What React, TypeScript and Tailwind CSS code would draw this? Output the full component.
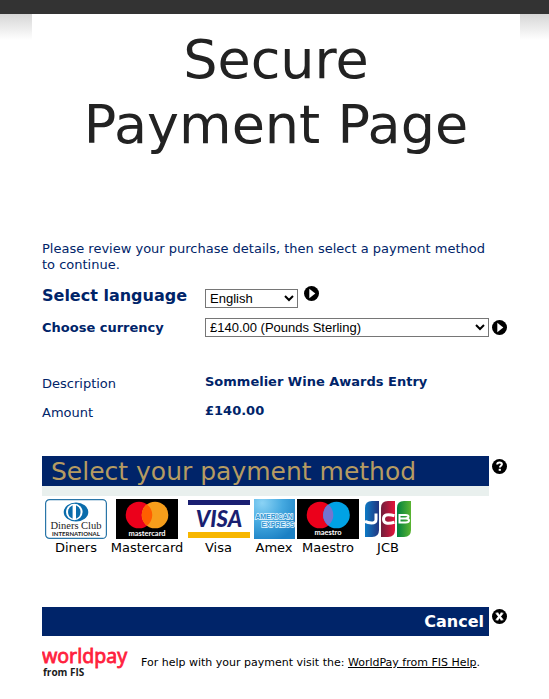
import type { ReactNode } from "react";

const logoText = { fontFamily: 'Lato, "Open Sans", sans-serif' };

function PlayIcon() {
  return (
    <svg viewBox="0 0 15 15" className="block size-[15px]" aria-hidden="true">
      <circle cx="7.5" cy="7.5" r="7.5" fill="#000" />
      <path d="M5.3 2.8v9.4L11.3 7.5z" fill="#fff" />
    </svg>
  );
}

function HelpIcon() {
  return (
    <svg viewBox="0 0 15 15" className="block size-[15px]" aria-hidden="true">
      <circle cx="7.5" cy="7.5" r="7.5" fill="#000" />
      <path d="M5.2 5.5C5.2 4 6.2 3.5 7.5 3.5s2.4.6 2.4 1.8c0 1.4-2 1.5-2 3.2" fill="none" stroke="#fff" strokeWidth="2" />
      <rect x="6.7" y="9.8" width="2.2" height="2" fill="#fff" />
    </svg>
  );
}

function CloseIcon() {
  return (
    <svg viewBox="0 0 15 15" className="block size-[15px]" aria-hidden="true">
      <circle cx="7.5" cy="7.5" r="7.5" fill="#000" />
      <path d="M4.8 4.3l5.4 6.4M10.2 4.3l-5.4 6.4" stroke="#fff" strokeWidth="2.2" />
      <path d="M3.6 4.2h3M8.4 4.2h3M3.6 10.8h3M8.4 10.8h3" stroke="#fff" strokeWidth="1" />
    </svg>
  );
}

function DinersLogo() {
  return (
    <svg viewBox="0 0 62 40" width="62" height="40" aria-hidden="true">
      <rect x="0.6" y="0.6" width="60.8" height="38.8" rx="4" fill="#fff" stroke="#2a76a8" strokeWidth="1.2" />
      <ellipse cx="31" cy="13" rx="12.3" ry="9.5" fill="#0a6cab" />
      <circle cx="29.3" cy="13" r="8.3" fill="#fff" />
      <path d="M27.6 6.3a7.2 7.2 0 0 0 0 13.4zM31 6.3a7.2 7.2 0 0 1 0 13.4z" fill="#0a6cab" />
      <text x="31" y="30" textAnchor="middle" fontSize="10.5" fontFamily='"Liberation Serif", serif' fill="#222">Diners Club</text>
      <text x="31" y="36.500" textAnchor="middle" fontSize="6" fontWeight="700" style={logoText} fill="#222">INTERNATIONAL</text>
    </svg>
  );
}

function MastercardLogo() {
  return (
    <svg viewBox="0 0 62 40" width="62" height="40" aria-hidden="true">
      <rect width="62" height="40" fill="#000" />
      <circle cx="23" cy="16" r="13.3" fill="#eb001b" />
      <circle cx="39" cy="16" r="13.3" fill="#f79e1b" />
      <path d="M31 5.4a13.3 13.3 0 0 1 0 21.2a13.3 13.3 0 0 1 0-21.2z" fill="#ff5f00" />
      <text x="31" y="36.5" textAnchor="middle" fontSize="7.5" fontWeight="700" style={logoText} fill="#fff">mastercard</text>
    </svg>
  );
}

function VisaLogo() {
  return (
    <svg viewBox="0 0 62 40" width="62" height="40" aria-hidden="true">
      <rect width="62" height="40" fill="#fff" />
      <rect y="1" width="62" height="5" fill="#1a1f71" />
      <rect y="33" width="62" height="6" fill="#f7b600" />
      <text x="31" y="27.5" textAnchor="middle" fontSize="22" fontWeight="900" fontStyle="italic" style={logoText} fill="#1a1f71">VISA</text>
    </svg>
  );
}

function AmexLogo() {
  return (
    <svg viewBox="0 0 41 40" width="41" height="40" aria-hidden="true">
      <defs>
        <radialGradient id="amex" cx="0.2" cy="0.1" r="1">
          <stop offset="0" stopColor="#8bd3f5" />
          <stop offset="0.5" stopColor="#45a9e0" />
          <stop offset="1" stopColor="#1b80c4" />
        </radialGradient>
      </defs>
      <rect width="41" height="40" fill="url(#amex)" />
      <g fontFamily='"Liberation Sans", Arial, sans-serif' fontSize="7" fontWeight="700" fill="#2f95d2" stroke="#e8f7ff" strokeWidth="1.4" style={{ paintOrder: "stroke" }}>
        <text x="20" y="20" textAnchor="middle">AMERICAN</text>
        <text x="40.5" y="28" textAnchor="end">EXPRESS</text>
      </g>
    </svg>
  );
}

function MaestroLogo() {
  return (
    <svg viewBox="0 0 62 40" width="62" height="40" aria-hidden="true">
      <rect width="62" height="40" fill="#000" />
      <circle cx="23" cy="16" r="13.3" fill="#eb001b" />
      <circle cx="39.5" cy="16" r="13.3" fill="#00a2e5" />
      <path d="M31.2 5.5a13.3 13.3 0 0 1 0 21a13.3 13.3 0 0 1 0-21z" fill="#7375cf" />
      <text x="31" y="36" textAnchor="middle" fontSize="7.5" fontWeight="700" style={logoText} fill="#fff">maestro</text>
    </svg>
  );
}

function JcbLogo() {
  return (
    <svg viewBox="0 0 48 40" width="48" height="40" aria-hidden="true">
      <defs>
        <linearGradient id="jcb-blue"><stop offset="0" stopColor="#0d7ac5" /><stop offset="1" stopColor="#22357f" /></linearGradient>
        <linearGradient id="jcb-red"><stop offset="0" stopColor="#6f1f3c" /><stop offset="1" stopColor="#e5133b" /></linearGradient>
        <linearGradient id="jcb-green"><stop offset="0" stopColor="#00813f" /><stop offset="1" stopColor="#5bb431" /></linearGradient>
      </defs>
      <path d="M1 9q0-7 7-7h7v29q0 7-7 7H1z" fill="url(#jcb-blue)" />
      <path d="M17 9q0-7 7-7h7v29q0 7-7 7h-7z" fill="url(#jcb-red)" />
      <path d="M33 9q0-7 7-7h7v29q0 7-7 7h-7z" fill="url(#jcb-green)" />
      <g fill="none" stroke="#fff" strokeWidth="3">
        <path d="M12 14.5v6q0 3.500-4.500 3.500-3.500 0-6.500-1.600" />
        <path d="M30.5 16.700q-11-3-11 3.300t11 3.300" />
        <path d="M34.5 16h7q3 0 3 1.600t-3 1.900h-7M34.500 19.500h7q3.500 0 3.500 2t-3.500 2h-7M35.500 15v9" strokeWidth="2" />
      </g>
    </svg>
  );
}

function WorldpayLogo() {
  return (
    <svg viewBox="0 0 86 34" width="86" height="34" className="shrink-0" role="img" aria-label="worldpay from FIS">
      <text x="0" y="16" fontSize="19.5" fontFamily='"Noto Sans", sans-serif' fill="#ff1f3e" stroke="#ff1f3e" strokeWidth="0.8">worldpay</text>
      <text x="1" y="29" fontSize="10" fontWeight="700" fontFamily='"Open Sans", sans-serif' fill="#1b1b1b">from FIS</text>
    </svg>
  );
}

const methods: { name: string; width: string; logo: ReactNode }[] = [
  { name: "Diners", width: "w-[68px]", logo: <DinersLogo /> },
  { name: "Mastercard", width: "w-[74px]", logo: <MastercardLogo /> },
  { name: "Visa", width: "w-[69px]", logo: <VisaLogo /> },
  { name: "Amex", width: "w-[42px]", logo: <AmexLogo /> },
  { name: "Maestro", width: "w-[66px]", logo: <MaestroLogo /> },
  { name: "JCB", width: "w-[54px]", logo: <JcbLogo /> },
];

const selectStyle =
  "h-[19px] rounded-none border border-[#767676] bg-white p-0 font-['Liberation_Sans',Arial,sans-serif] text-[13px] leading-4 text-black";

export default function App() {
  return (
    <div className="border-t-[14px] border-[#333] bg-linear-to-b from-[#d6d6d6] to-white to-[26px] font-['DejaVu_Sans',Verdana,sans-serif] text-[13px] leading-4 text-[#002469]">
      <main className="mr-[29px] ml-8 bg-white px-[10px]">
        <h1 className="px-4 pt-[13px] text-center text-[54px] leading-[65px] text-[#222]">
          Secure <br />Payment Page
        </h1>

        <p className="mt-[84px] pr-4">
          Please review your purchase details, then select a payment method to continue.
        </p>

        <form onSubmit={(e) => e.preventDefault()}>
          <div className="mt-[13px] flex items-start">
            <label htmlFor="language" className="w-[163px] shrink-0 text-base leading-5 font-bold">
              Select language
            </label>
            <select id="language" className={`mt-[3px] w-[93px] ${selectStyle}`}>
              <option>English</option>
            </select>
            <button type="submit" aria-label="Apply language" className="ml-[6px]">
              <PlayIcon />
            </button>
          </div>
          <div className="mt-[10px] flex items-center">
            <label htmlFor="currency" className="w-[163px] shrink-0 font-bold">
              Choose currency
            </label>
            <select id="currency" className={`min-w-0 flex-1 ${selectStyle}`}>
              <option>£140.00 (Pounds Sterling)</option>
            </select>
            <button type="submit" aria-label="Apply currency" className="mr-[3px] ml-[3px]">
              <PlayIcon />
            </button>
          </div>
        </form>

        <dl className="mt-[37px] grid grid-cols-[163px_1fr] gap-y-[11px]">
          <dt className="pt-[2px]">Description</dt>
          <dd className="font-bold">Sommelier Wine Awards Entry</dd>
          <dt className="pt-[2px]">Amount</dt>
          <dd className="font-bold">£140.00</dd>
        </dl>

        <section className="mt-[35px]">
          <div className="flex items-start">
            <h2 className="h-10 flex-1 border-b-[10px] border-[#e9f0ee] bg-[#002469] pl-[9px] text-[25px] leading-8 text-[#b59b62]">
              Select your payment method
            </h2>
            <button type="button" aria-label="Help" className="mt-[3px] mr-[3px] ml-[3px]">
              <HelpIcon />
            </button>
          </div>
          <div className="mt-[3px] flex">
            {methods.map((m) => (
              <button key={m.name} type="button" className={`flex shrink-0 flex-col items-center gap-px whitespace-nowrap text-black ${m.width}`}>
                {m.logo}
                {m.name}
              </button>
            ))}
          </div>
        </section>

        <div className="mt-[51px] flex items-start">
          <button type="button" className="h-[29px] flex-1 bg-[#002469] pr-[5px] text-right text-base font-bold text-white">
            Cancel
          </button>
          <button type="button" aria-label="Cancel payment" className="mt-[2px] mr-[3px] ml-[3px]">
            <CloseIcon />
          </button>
        </div>

        <footer className="mt-[11px] flex items-start">
          <WorldpayLogo />
          <p className="ml-[13px] pt-2 text-[11px] text-black">
            For help with your payment visit the:{" "}
            <a href="#help" className="underline">WorldPay from FIS Help</a>.
          </p>
        </footer>
      </main>
    </div>
  );
}
